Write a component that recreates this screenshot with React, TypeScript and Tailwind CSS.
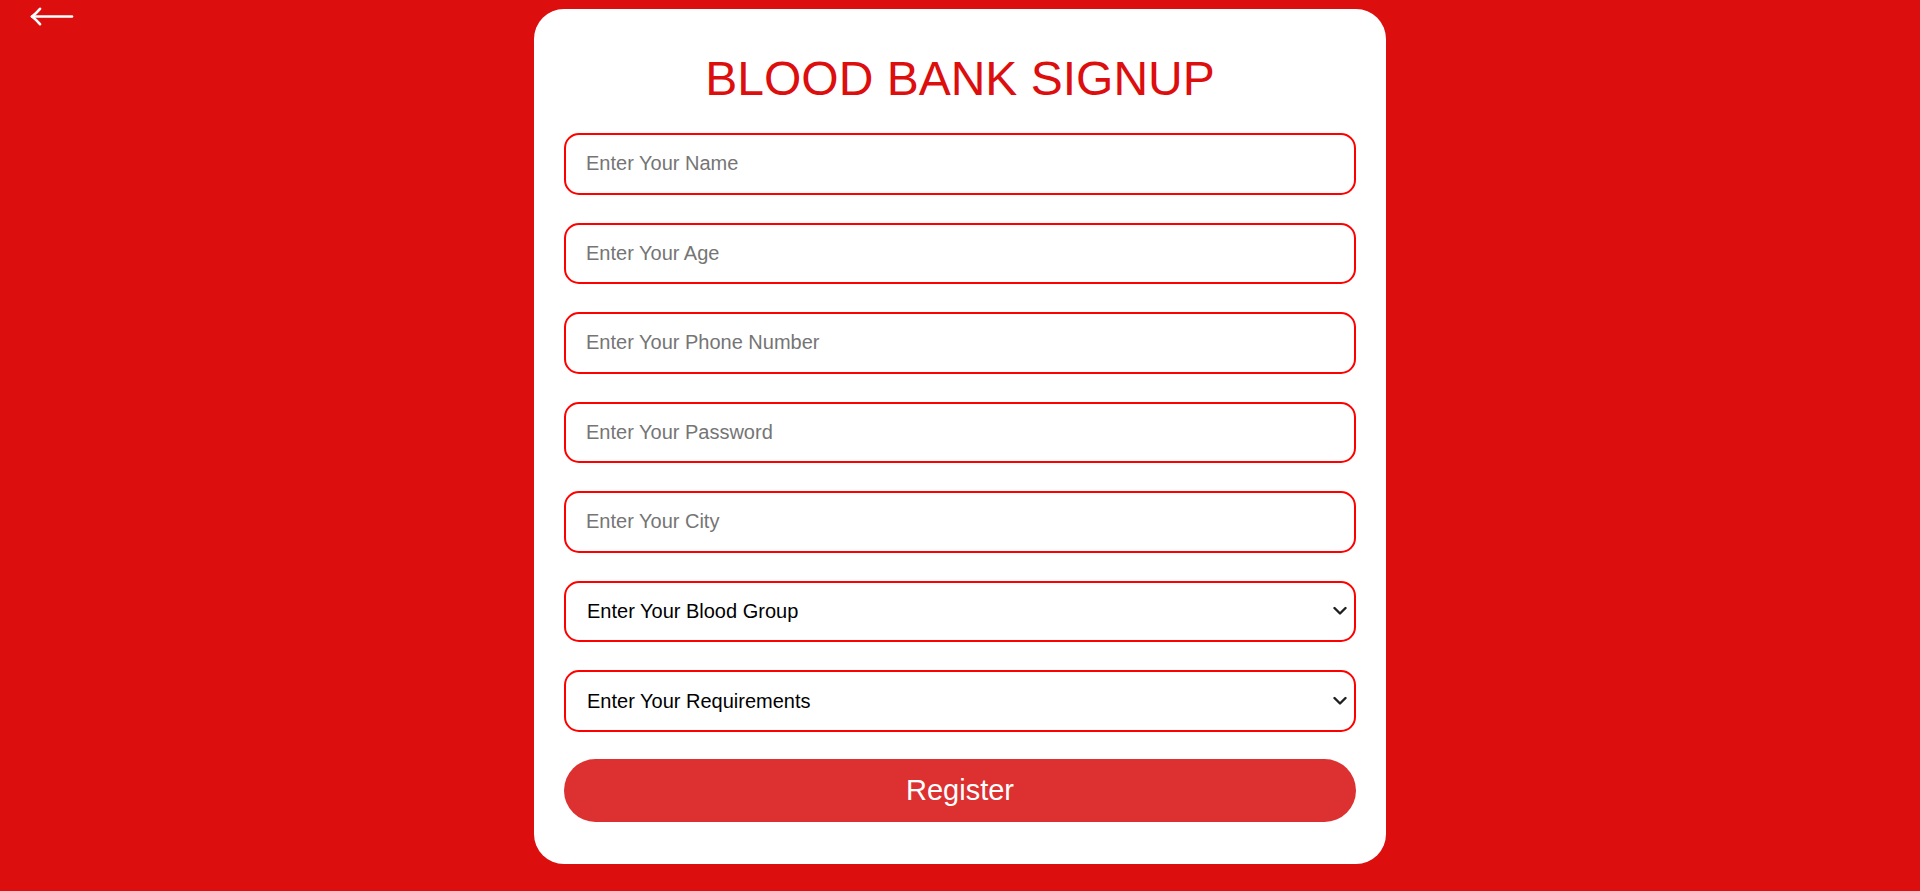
import { useState } from 'react';

const fields = [
    { name: 'name', placeholder: 'Enter Your Name', type: 'text' },
    { name: 'age', placeholder: 'Enter Your Age', type: 'number' },
    { name: 'phone', placeholder: 'Enter Your Phone Number', type: 'text' },
    { name: 'password', placeholder: 'Enter Your Password', type: 'password' },
    { name: 'city', placeholder: 'Enter Your City', type: 'text' },
];

const selects = [
    {
        name: 'bloodGroup',
        placeholder: 'Enter Your Blood Group',
        options: [ 'A+', 'A-', 'B+', 'B-', 'AB+', 'AB-', 'O+', 'O-' ],
    },
    {
        name: 'requirement',
        placeholder: 'Enter Your Requirements',
        options: [ 'Blood', 'Plasma', 'Platelets' ],
    },
];

const Chevron = () => (
    <svg
        className="pointer-events-none absolute right-[9px] top-1/2 -translate-y-1/2"
        width="14"
        height="9"
        viewBox="0 0 14 9"
        fill="none"
        stroke="#1f1f1f"
        strokeWidth="2.4"
        strokeLinecap="round"
        strokeLinejoin="round"
    >
        <path d="M1.5 1.5 L7 7 L12.5 1.5" />
    </svg>
);

const App = () =>
{
    const [ form, setForm ] = useState<Record<string, string>>( {
        name: '',
        age: '',
        phone: '',
        password: '',
        city: '',
        bloodGroup: '',
        requirement: '',
    } );

    const handleChange = ( e: any ) =>
    {
        const { name, value } = e.target;
        setForm( { ...form, [ name ]: value } );
    };

    const handleSubmit = ( e: any ) =>
    {
        e.preventDefault();
    };

    return (
        <div className="relative min-h-[891px] bg-[#dd0e0e] pt-[9px] font-['Liberation_Sans',Arial,sans-serif]">
            {/* back arrow */ }
            <button className="absolute left-[30px] top-[7px] text-white" type="button" aria-label="Back">
                <svg width="45" height="20" viewBox="0 0 45 20" fill="none" stroke="white" strokeWidth="2.6" strokeLinecap="round" strokeLinejoin="round">
                    <path d="M2 9.5 H42" />
                    <path d="M10 1.8 Q6 6.5 2 9.5 Q6 12.5 10 17.2" />
                </svg>
            </button>

            <form
                className="mx-auto w-[852px] rounded-[30px] bg-white px-[30px] pt-[42px] pb-[42px]"
                onSubmit={ handleSubmit }
            >
                <h1 className="mb-[27px] text-center text-[48px] leading-[55px] text-[#dd0e0e]">
                    BLOOD BANK SIGNUP
                </h1>

                { fields.map( ( f ) => (
                    <input
                        key={ f.name }
                        className="mb-[28px] block h-[61.5px] w-full rounded-[15px] border-2 border-[#ff0000] px-[20px] text-[20px] text-black outline-none placeholder:text-[#757575]"
                        type={ f.type }
                        name={ f.name }
                        placeholder={ f.placeholder }
                        value={ form[ f.name ] }
                        onChange={ handleChange }
                    />
                ) ) }

                { selects.map( ( s ) => (
                    <div key={ s.name } className="relative mb-[28px]">
                        <select
                            name={ s.name }
                            value={ form[ s.name ] }
                            onChange={ handleChange }
                            className="block h-[61.5px] w-full appearance-none rounded-[15px] border-2 border-[#ff0000] pl-[21px] pr-[30px] text-[20px] text-black outline-none"
                        >
                            <option value="">{ s.placeholder }</option>
                            { s.options.map( ( o ) => (
                                <option key={ o } value={ o }>{ o }</option>
                            ) ) }
                        </select>
                        <Chevron />
                    </div>
                ) ) }

                <button
                    className="-mt-px block h-[63.5px] w-full rounded-full bg-[#dd3031] text-[29px] text-white"
                    type="submit"
                >
                    Register
                </button>
            </form>
        </div>
    );
};

export default App;
